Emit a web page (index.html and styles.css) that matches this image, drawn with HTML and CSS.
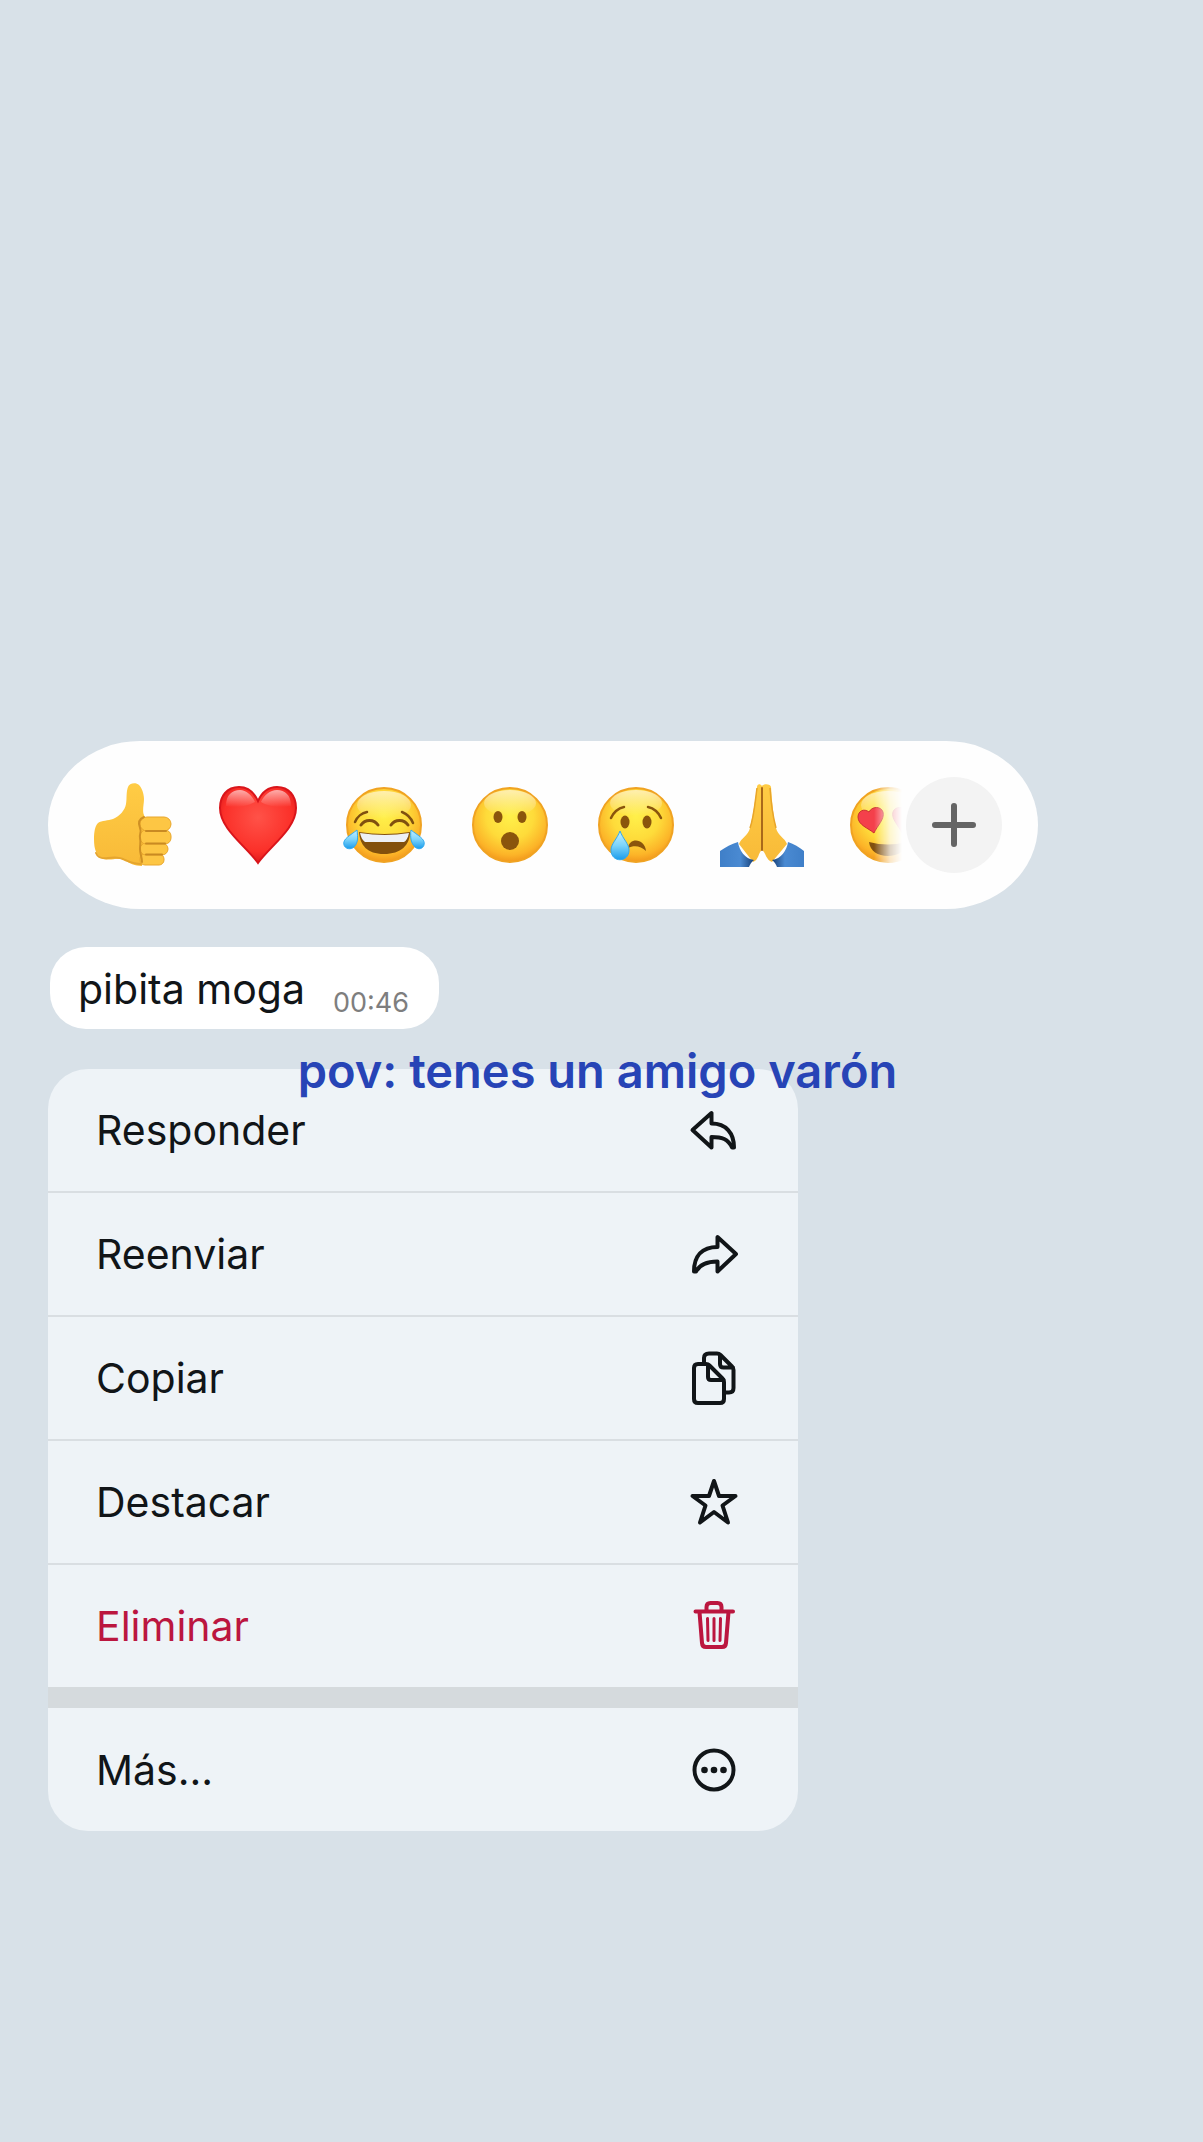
FILE: index.html
```html
<!DOCTYPE html>
<html lang="es">
<head>
    <meta charset="UTF-8">
    <meta name="viewport" content="width=device-width, initial-scale=1">
    <title>Chat</title>
    <link rel="stylesheet" href="styles.css">
</head>
<body>
<!-- shared gradients -->
<svg class="defs" width="0" height="0" aria-hidden="true">
    <defs>
        <radialGradient id="face" cx="50%" cy="38%" r="64%">
            <stop offset="0" stop-color="#fff04a"/>
            <stop offset=".5" stop-color="#fedb3a"/>
            <stop offset=".82" stop-color="#fcb428"/>
            <stop offset="1" stop-color="#f0921a"/>
        </radialGradient>
        <linearGradient id="shine" x1="0" y1="0" x2="0" y2="1">
            <stop offset="0" stop-color="#fff" stop-opacity=".6"/>
            <stop offset="1" stop-color="#fff" stop-opacity="0"/>
        </linearGradient>
        <linearGradient id="skin" x1="0" y1="0" x2="0" y2="1">
            <stop offset="0" stop-color="#ffcc45"/>
            <stop offset="1" stop-color="#f8ba38"/>
        </linearGradient>
        <radialGradient id="red" cx="50%" cy="40%" r="60%">
            <stop offset="0" stop-color="#ff5248"/>
            <stop offset=".75" stop-color="#fb3029"/>
            <stop offset="1" stop-color="#df1a1c"/>
        </radialGradient>
        <linearGradient id="tear" x1="0" y1="0" x2="0" y2="1">
            <stop offset="0" stop-color="#c4f0ff"/>
            <stop offset=".5" stop-color="#7dd4fa"/>
            <stop offset="1" stop-color="#1a9cec"/>
        </linearGradient>
        <linearGradient id="sleeve" x1="0" y1="0" x2="1" y2="0">
            <stop offset="0" stop-color="#3f7fc8"/>
            <stop offset=".6" stop-color="#4a8ad2"/>
            <stop offset="1" stop-color="#173f76"/>
        </linearGradient>
    </defs>
</svg>

<main class="chat">
    <div class="reactions">
        <div class="reactions-list">
            <button type="button" aria-label="Me gusta">
                <svg viewBox="0 0 84 84">
                    <path fill="url(#skin)" d="M38 4C39 0 46-1 49 2c3 3 5 9 5 14s-2 12 0 16l2 8-4 43c-7 0-13-3-18-6-6-3-13 1-20-1C6 73 4 66 4 56c0-7 1-13 4-16 4-3 10-2 15-4 7-3 12-9 13-15 1-5 0-12 2-17z"/>
                    <g fill="#fdc644" stroke="#e8a62c">
                        <rect x="50" y="71" width="24" height="11" rx="5"/>
                        <rect x="50" y="60" width="28" height="12" rx="6"/>
                        <rect x="50" y="47" width="31" height="14" rx="6"/>
                        <rect x="50" y="34" width="31" height="14" rx="7"/>
                    </g>
                    <path fill="none" stroke="#c98a22" stroke-width="2" stroke-linecap="round" d="M56 48h20M56 60.500h19M56 71.500h16"/>
                    <path fill="none" stroke="#cf9024" stroke-width="2" stroke-linecap="round" d="M54 34c-5 2-6 6-4 11 2 4-1 6 0 10 1 4 0 6 0 11s2 8 2 13"/>
                    <path fill="none" stroke="#e5a52e" stroke-width="2" stroke-linecap="round" d="M6 70c2 5 6 6 12 5 7-1 12-1 17 2 5 2 9 4 16 4"/>
                </svg>
            </button>
            <button type="button" aria-label="Me encanta">
                <svg viewBox="0 0 84 84">
                    <path fill="url(#red)" stroke="#d9151b" stroke-width="2" d="M42 18C38 9 31 4 23 4 11 4 4 13 4 25c0 21 26 38 38 55 12-17 38-34 38-55C80 13 73 4 61 4c-8 0-15 5-19 14z"/>
                    <path fill="url(#shine)" d="M10 23C10 12 16 7 24 7c6 0 12 5 15 12-9 5-21 6-29 4zM45 19C48 12 54 7 61 7c8 0 14 5 14 16-9 2-22 1-30-4z"/>
                </svg>
            </button>
            <button type="button" aria-label="Me divierte">
                <svg viewBox="0 0 84 84">
                    <circle class="face" cx="42" cy="42" r="37"/>
                    <ellipse cx="42" cy="22" rx="27" ry="14" fill="url(#shine)"/>
                    <g fill="none" stroke="#80500f" stroke-width="3" stroke-linecap="round">
                        <path d="M19 42c4-6 13-6 17 0M49 42c4-6 13-6 17 0"/>
                        <path stroke-width="2.5" d="M13 39c2-5 7-9 12-10M60 29c5 2 9 6 11 11"/>
                    </g>
                    <path fill="#83500c" d="M17 49q25 4 51 0c0 13-9 22-26 22S18 62 17 49z"/>
                    <path fill="#eef0f5" d="M18 50q25 4 49 0c-1 5-3 8-5 9H23c-3-2-4-5-5-9z"/>
                    <path fill="url(#tear)" stroke="#30a9ee" d="M15 47c1 8 1 13-3 17-3 3-9 2-10-2-2-6 7-10 13-15zM69 47c-1 8 0 13 4 17 3 3 8 2 9-2 2-6-7-10-13-15z"/>
                </svg>
            </button>
            <button type="button" aria-label="Me asombra">
                <svg viewBox="0 0 84 84">
                    <circle class="face" cx="42" cy="42" r="37"/>
                    <ellipse cx="42" cy="20" rx="26" ry="13" fill="url(#shine)"/>
                    <g fill="#8a550c">
                        <ellipse cx="30" cy="34" rx="4.5" ry="6"/>
                        <ellipse cx="54" cy="34" rx="4.5" ry="6"/>
                        <circle cx="42" cy="58" r="9"/>
                    </g>
                </svg>
            </button>
            <button type="button" aria-label="Me entristece">
                <svg viewBox="0 0 84 84">
                    <circle class="face" cx="42" cy="42" r="37"/>
                    <ellipse cx="42" cy="20" rx="26" ry="13" fill="url(#shine)"/>
                    <g fill="#8a550c">
                        <ellipse cx="31" cy="39" rx="4.5" ry="6.5"/>
                        <ellipse cx="53" cy="39" rx="4.5" ry="6.5"/>
                    </g>
                    <path fill="#8a550c" d="M34 65c1-11 17-10 18 3-5-5-12-6-18-3z"/>
                    <path fill="none" stroke="#8a550c" stroke-width="2.5" stroke-linecap="round" d="M17 35c2-5 7-10 13-11M54 24c6 1 11 6 13 11"/>
                    <path fill="url(#tear)" stroke="#30a9ee" d="M26 48c-3 8-9 13-9 19 0 13 18 13 18 0 0-6-6-11-9-19z"/>
                </svg>
            </button>
            <button type="button" aria-label="Gracias">
                <svg viewBox="0 0 84 84">
                    <path fill="url(#skin)" d="M42 3c-2-3-5-2-5 1-2 15-4 28-7 41-2 8-9 10-11 16l14 18c6-2 5-9 9-12 4 3 4 10 10 12l15-18c-2-6-9-8-11-16-3-13-4-26-5-41 0-3-7-4-9-1z"/>
                    <path fill="none" stroke="#e8a52a" stroke-width="1.5" d="M37 5c-2 15-3 29-7 40M50 5c1 15 3 29 6 40"/>
                    <path fill="none" stroke="#a9681a" stroke-width="2" stroke-linecap="round" d="M42 5v62"/>
                    <path fill="url(#sleeve)" d="M0 84V68c6-4 11-7 18-9 1 8 7 17 16 18-3 2-4 5-5 7z"/>
                    <path fill="url(#sleeve)" transform="matrix(-1 0 0 1 84 0)" d="M0 84V68c5-4 10-7 16-9 1 8 7 17 16 18-3 2-4 5-5 7z"/>
                </svg>
            </button>
            <button type="button" aria-label="Me enamora">
                <svg viewBox="0 0 84 84">
                    <circle class="face" cx="42" cy="42" r="37"/>
                    <ellipse cx="42" cy="22" rx="27" ry="14" fill="url(#shine)"/>
                    <path fill="#f4404b" stroke="#c9312f" d="M23 29c-5-4-11-1-11 5 0 8 10 11 16 16 3-7 11-14 9-21-2-6-11-6-14 0z"/>
                    <path fill="#f4404b" stroke="#c9312f" d="M61 29c5-4 11-1 11 5 0 8-10 11-16 16-3-7-11-14-9-21 2-6 11-6 14 0z"/>
                    <path fill="#80500f" d="M23 59q19 5 38 0c-1 9-9 14-19 14s-18-5-19-14z"/>
                </svg>
            </button>
        </div>
        <button type="button" class="more-reactions" aria-label="Más reacciones">
            <svg viewBox="0 0 48 48"><path d="M24 5v38M5 24h38"/></svg>
        </button>
    </div>

    <div class="bubble">
        <p>pibita moga</p>
        <time>00:46</time>
    </div>

    <div class="menu-wrap">
        <p class="caption">pov: tenes un amigo varón</p>
        <div class="menu">
            <button type="button" class="item">Responder
                <svg viewBox="0 0 56 56"><path d="M6.500 28L25.500 11v10.500C40 21.500 48 31 48 45.500h-2C42 37 36 35 25.500 35v10.500z"/></svg>
            </button>
            <button type="button" class="item">Reenviar
                <svg viewBox="0 0 56 56"><path d="M50 28L31.500 11v10C16 21 8 30 8 45.500h2C14 38 21 35.500 31.500 35.500v10z"/></svg>
            </button>
            <button type="button" class="item">Copiar
                <svg viewBox="0 0 56 56">
                    <path d="M12 14h8q2 0 3.500 1.500l13 13q1.500 1.500 1.500 3.500V49q0 4-4 4H12q-4 0-4-4V18q0-4 4-4z"/>
                    <path d="M22 15v12q0 3 3 3h12.500M18 13V8q0-4.500 5-4.500h8q2 0 3.500 1.500l11.500 11.500q1.500 1.500 1.500 3.500v18q0 4.500-4.500 4.500H38M34 5v9q0 3.500 3.500 3.500h9.500"/>
                </svg>
            </button>
            <button type="button" class="item">Destacar
                <svg viewBox="0 0 56 56"><path d="M28 7l5 15h16.500L36.500 31.500l5.500 17L28 38 14 48.500l5.500-17L6.500 22H23z"/></svg>
            </button>
            <button type="button" class="item delete">Eliminar
                <svg viewBox="0 0 56 56">
                    <path d="M9.500 13.500h37.500M20.500 13V9q0-4 4-4h7q4 0 4 4v4M13.500 14l2.500 31q.300 4 4 4h16q3.700 0 4-4l2.500-31"/>
                    <path stroke-width="3" d="M21.500 20.500l.500 22M28 20.500v22M34.500 20.500l-.500 22"/>
                </svg>
            </button>
            <button type="button" class="item">Más...
                <svg viewBox="0 0 56 56">
                    <circle cx="28" cy="28" r="19.500"/>
                    <g class="dots"><circle cx="18.500" cy="28" r="3.300"/><circle cx="28" cy="28" r="3.300"/><circle cx="37.500" cy="28" r="3.300"/></g>
                </svg>
            </button>
        </div>
    </div>
</main>
</body>
</html>
```
FILE: styles.css
```css
* {
    box-sizing: border-box;
    margin: 0;
    padding: 0;
}
body {
    background: #d8e1e8;
    font-family: Inter, "Liberation Sans", sans-serif;
    color: #111518;
}
button {
    border: 0;
    background: none;
    font: inherit;
    color: inherit;
    cursor: pointer;
}
svg {
    display: block;
}
.defs {
    position: absolute;
}
.chat {
    position: relative;
    min-height: 100vh;
    padding: 741px 48px 48px;
}

/* reactions */
.reactions {
    display: flex;
    align-items: center;
    max-width: 990px;
    height: 168px;
    padding: 0 36px 0 42px;
    background: #fefefe;
    border-radius: 92px / 84px;
}
.reactions-list {
    display: flex;
    flex: 1;
    gap: 42px;
    min-width: 0;
    overflow: hidden;
    -webkit-mask-image: linear-gradient(to left, transparent 4px, rgba(0, 0, 0, 0.25) 16px, #000 32px);
    mask-image: linear-gradient(to left, transparent 4px, rgba(0, 0, 0, 0.25) 16px, #000 32px);
}
.reactions-list button {
    flex: none;
    width: 84px;
    height: 84px;
}
.face {
    fill: url(#face);
    stroke: #f0a322;
    stroke-width: 2;
}
.more-reactions {
    display: flex;
    flex: none;
    align-items: center;
    justify-content: center;
    width: 96px;
    height: 96px;
    border-radius: 50%;
    background: #f3f3f3;
}
.more-reactions svg {
    width: 48px;
    height: 48px;
    fill: none;
    stroke: #646464;
    stroke-width: 6;
    stroke-linecap: round;
}

/* message */
.bubble {
    display: flex;
    align-items: flex-end;
    gap: 28px;
    width: fit-content;
    height: 82px;
    margin: 38px 0 40px 2px;
    padding: 0 30px 10px 28px;
    background: #fff;
    border-radius: 36px;
    white-space: nowrap;
}
.bubble p {
    font-size: 41px;
    line-height: 60px;
}
.bubble time {
    font-size: 27px;
    line-height: 32px;
    color: #7e7e7e;
}

/* context menu */
.menu {
    max-width: 750px;
    overflow: hidden;
    border-radius: 40px;
    background: #eef3f7;
}
.item {
    display: flex;
    align-items: center;
    justify-content: space-between;
    width: 100%;
    height: 124px;
    padding: 0 56px 0 48px;
    border-bottom: 2px solid #d9dee2;
    font-size: 41px;
    text-align: left;
}
.item:last-child {
    height: 123px;
    border-bottom: 0;
}
.item svg {
    width: 56px;
    height: 56px;
    fill: none;
    stroke: currentColor;
    stroke-width: 4;
    stroke-linejoin: round;
    stroke-linecap: round;
}
.item .dots {
    fill: currentColor;
    stroke: none;
}
.item.delete {
    height: 143px;
    border-bottom: 21px solid #d5dadd;
    color: #bb163f;
}
.caption {
    position: absolute;
    left: 0;
    right: 8px;
    margin-top: -30px;
    font-size: 47px;
    font-weight: 600;
    line-height: 64px;
    text-align: center;
    color: #2744b6;
    pointer-events: none;
}
```
